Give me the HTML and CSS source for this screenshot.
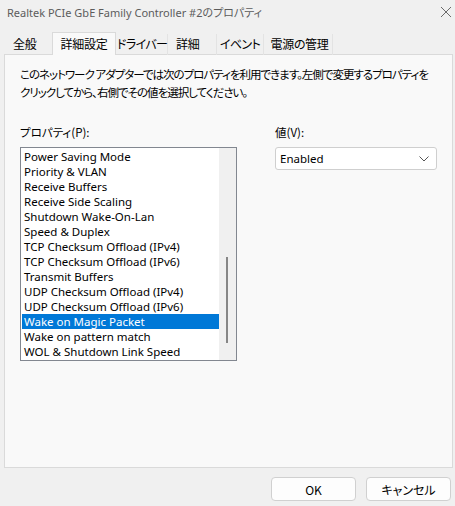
FILE: index.html
```html
<!DOCTYPE html>
<html lang="ja">
<head>
<meta charset="utf-8">
<link rel="stylesheet" href="styles.css">
</head>
<body>
<div class="window">
  <div class="titlebar">
    <span class="title">Realtek PCIe GbE Family Controller #2のプロパティ</span>
    <svg class="close" width="12" height="12" viewBox="0 0 12 12"><path d="M1 1L11 11M11 1L1 11" stroke="#6a6a6a" stroke-width="1" fill="none"/></svg>
  </div>
  <div class="tabs">
    <div class="tab t-general">全般</div>
    <div class="tab t-adv active">詳細設定</div>
    <div class="tab t-drv">ドライバー</div>
    <div class="tab t-det">詳細</div>
    <div class="tab t-evt">イベント</div>
    <div class="tab t-pwr">電源の管理</div>
  </div>
  <div class="panel">
    <p class="desc">このネットワーク アダプターでは次のプロパティを利用できます。左側で変更するプロパティを<br>クリックしてから、右側でその値を選択してください。</p>
    <div class="cols">
      <div class="col-left">
        <div class="label">プロパティ(P):</div>
        <div class="listbox">
          <ul class="items">
            <li>Power Saving Mode</li>
            <li>Priority &amp; VLAN</li>
            <li>Receive Buffers</li>
            <li>Receive Side Scaling</li>
            <li>Shutdown Wake-On-Lan</li>
            <li>Speed &amp; Duplex</li>
            <li>TCP Checksum Offload (IPv4)</li>
            <li>TCP Checksum Offload (IPv6)</li>
            <li>Transmit Buffers</li>
            <li>UDP Checksum Offload (IPv4)</li>
            <li>UDP Checksum Offload (IPv6)</li>
            <li class="sel">Wake on Magic Packet</li>
            <li>Wake on pattern match</li>
            <li>WOL &amp; Shutdown Link Speed</li>
          </ul>
          <div class="scrollbar"><div class="thumb"></div></div>
        </div>
      </div>
      <div class="col-right">
        <div class="label">値(V):</div>
        <div class="select">
          <span>Enabled</span>
          <svg width="10" height="6" viewBox="0 0 10 6"><path d="M0.5 0.5L5 5L9.5 0.5" stroke="#555" stroke-width="1" fill="none"/></svg>
        </div>
      </div>
    </div>
  </div>
  <div class="buttons">
    <button class="btn">OK</button>
    <button class="btn">キャンセル</button>
  </div>
</div>
</body>
</html>
```

FILE: styles.css
```css
* { box-sizing: border-box; }
html, body { margin: 0; padding: 0; }
body {
  width: 455px;
  height: 506px;
  background: #f0f0f0;
  font-family: "Noto Sans", "Noto Sans CJK JP", sans-serif;
  font-size: 11.5px;
  color: #000;
  overflow: hidden;
}
.window { display: flex; flex-direction: column; height: 506px; }
.titlebar {
  height: 25px;
  display: flex;
  align-items: center;
  justify-content: space-between;
  padding: 0 3px 1px 7px;
}
.title { color: #5c5c5c; font-size: 11px; font-feature-settings: "palt"; white-space: nowrap; }
.tabs {
  display: flex;
  height: 30px;
  padding: 9px 0 0 4px;
  position: relative;
  z-index: 1;
}
.tab {
  height: 21px;
  line-height: 20px;
  font-family: "Noto Sans CJK JP", sans-serif;
  font-feature-settings: "palt";
  font-size: 12px;
  letter-spacing: -0.3px;
  white-space: nowrap;
  color: #000;
  text-align: center;
  border-right: 1px solid #e3e3e3;
}
.t-general { width: 48px; border-right: none; text-align: left; padding-left: 9px; }
.t-adv { width: 64px; }
.t-drv { width: 52px; text-align: left; padding-left: 1px; letter-spacing: -0.6px; }
.t-det { width: 49px; text-align: left; padding-left: 8px; }
.t-evt { width: 47px; letter-spacing: -0.6px; }
.t-pwr { width: 69px; padding-left: 3px; }
.tab.active {
  background: #f9f9f9;
  border: 1px solid #dadada;
  border-bottom: none;
  height: 23px;
  margin-top: -2px;
  line-height: 22px;
}
.panel {
  margin: -1px 2px 0 4px;
  height: 414px;
  background: #f9f9f9;
  border: 1px solid #dadada;
  padding: 10px 0 0 15px;
}
.desc {
  margin: 0;
  font-family: "Noto Sans CJK JP", sans-serif;
  font-feature-settings: "palt";
  line-height: 18px;
  font-size: 11.5px;
  letter-spacing: -1px;
  white-space: nowrap;
}
.cols { display: flex; margin-top: 23px; }
.col-left { width: 217px; }
.col-right { margin-left: 38px; }
.label {
  font-family: "Noto Sans CJK JP", sans-serif;
  font-feature-settings: "palt";
  height: 17px;
  line-height: 17px;
}
.listbox {
  margin-top: 6px;
  width: 217px;
  height: 214px;
  border: 1px solid #828790;
  background: #fff;
  display: flex;
}
.items {
  list-style: none;
  margin: 0;
  padding: 1px 0 0 1px;
  flex: 1;
}
.items li {
  height: 15px;
  line-height: 15px;
  padding-left: 2px;
  white-space: nowrap;
}
.items li.sel { background: #0078d7; color: #fff; }
.scrollbar {
  width: 17px;
  background: #f0f0f0;
  position: relative;
}
.thumb {
  position: absolute;
  left: 7px;
  top: 109px;
  width: 2px;
  height: 86px;
  background: #868686;
}
.select {
  margin-top: 6px;
  width: 162px;
  height: 23px;
  background: #fff;
  border: 1px solid #cfcfcf;
  border-radius: 3px;
  display: flex;
  align-items: center;
  justify-content: space-between;
  padding: 0 7px 0 4px;
}
.buttons {
  display: flex;
  justify-content: flex-end;
  gap: 10px;
  padding: 9px 4px 0 0;
}
.btn {
  width: 85px;
  height: 24px;
  background: #fdfdfd;
  border: 1px solid #d0d0d0;
  border-radius: 4px;
  font-family: "Noto Sans CJK JP", sans-serif;
  font-feature-settings: "palt";
  font-size: 12px;
  color: #000;
  padding: 0;
}
```
